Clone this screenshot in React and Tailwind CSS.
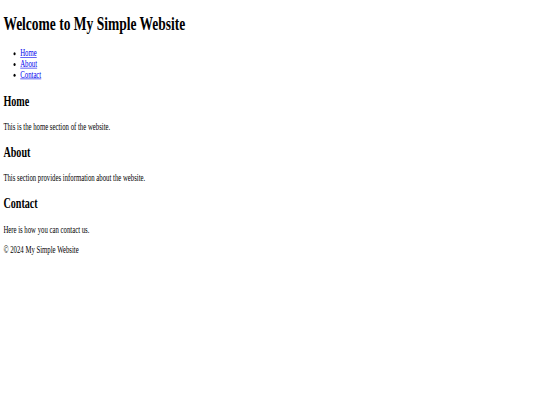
export default function App() {
  return (
    <div className="w-[540px] h-[405px] overflow-hidden bg-white">
      <div className="flow-root w-[1280px] h-[675px] origin-top-left scale-x-[0.421875] scale-y-[0.6] px-2 font-['Liberation_Serif','Times_New_Roman',serif] text-base leading-[1.15] text-black">
        <header>
          <h1 className="text-[32px] font-bold my-[21.44px]">Welcome to My Simple Website</h1>
          <nav>
            <ul className="list-disc pl-10 my-4">
              <li><a href="#home" className="text-[#0000ee] underline">Home</a></li>
              <li><a href="#about" className="text-[#0000ee] underline">About</a></li>
              <li><a href="#contact" className="text-[#0000ee] underline">Contact</a></li>
            </ul>
          </nav>
        </header>
        <main>
          <section id="home">
            <h2 className="text-2xl leading-[1.15] font-bold my-[19.92px]">Home</h2>
            <p className="my-4">This is the home section of the website.</p>
          </section>
          <section id="about">
            <h2 className="text-2xl leading-[1.15] font-bold my-[19.92px]">About</h2>
            <p className="my-4">This section provides information about the website.</p>
          </section>
          <section id="contact">
            <h2 className="text-2xl leading-[1.15] font-bold my-[19.92px]">Contact</h2>
            <p className="my-4">Here is how you can contact us.</p>
          </section>
        </main>
        <footer>
          <p className="my-4">© 2024 My Simple Website</p>
        </footer>
      </div>
    </div>
  );
}
